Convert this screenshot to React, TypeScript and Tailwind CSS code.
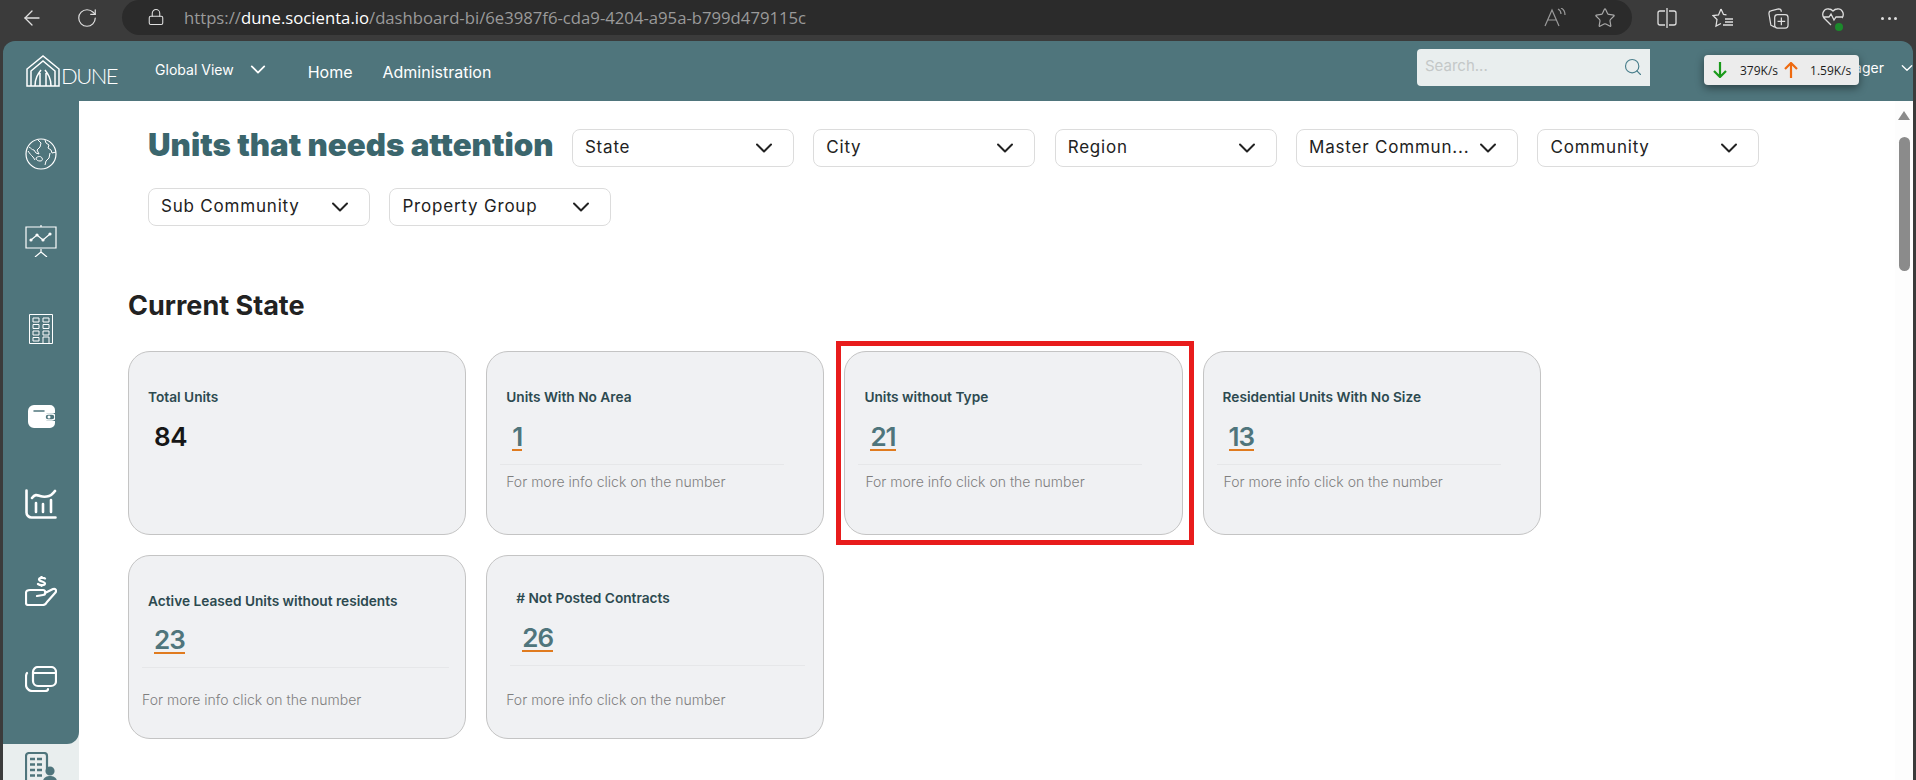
import React from "react";
import { ArrowLeft, Lock, RotateCw, Search, Star } from "lucide-react";

const Chevron = ({ className = "" }: { className?: string }) => (
  <svg viewBox="0 0 18 10" className={className} fill="none" stroke="currentColor" strokeWidth="2" strokeLinecap="round" strokeLinejoin="round">
    <polyline points="2,1.5 9,8.5 16,1.5" />
  </svg>
);

const filters = ["State", "City", "Region", "Master Commun...", "Community", "Sub Community", "Property Group"];

const Select = ({ label }: { label: string }) => (
  <div className="flex h-[38px] w-[222px] items-center justify-between rounded-[8px] border border-[#dcdcdc] bg-white pl-[12px] pr-[20px] text-[17px] tracking-[0.8px] text-[#222]">
    <span className="whitespace-nowrap pb-[1px]">{label}</span>
    <Chevron className="h-[10px] w-[18px] shrink-0 text-[#222]" />
  </div>
);

interface CardProps {
  title: string;
  value: string;
  link?: boolean;
  titleClass?: string;
  numClass?: string;
  ruleClass?: string;
  noteClass?: string;
  marked?: boolean;
}

const Card = ({
  title,
  value,
  link = true,
  titleClass = "pt-[35px] pl-[19px]",
  numClass = "mt-[16px] ml-[25px]",
  ruleClass = "mt-[12px] ml-[13px] w-[284px]",
  noteClass = "mt-[8px] ml-[19px]",
  marked = false,
}: CardProps) => (
  <div className="relative flex h-[184px] flex-col rounded-[22px] border border-[#c4c4c4] bg-[#f0f1f3]">
    <div className={`h-[20px] whitespace-nowrap text-[13.700px] font-semibold leading-[20px] text-[#2d4a50] ${titleClass}`} style={{ boxSizing: "content-box" }}>
      {title}
    </div>
    <div className={numClass}>
      {link ? (
        <span className="inline-block h-[28px] border-b-2 border-[#e07b1f] text-[26px] font-semibold leading-[28px] tracking-[-1px] text-[#4f757c]">{value}</span>
      ) : (
        <span className="inline-block h-[28px] text-[26px] font-semibold leading-[28px] tracking-[-0.5px] text-[#161616]">{value}</span>
      )}
    </div>
    {link && (
      <>
        <div className={`h-px bg-[#e6e7e9] ${ruleClass}`} />
        <div className={`h-[18px] whitespace-nowrap text-[14px] font-light leading-[18px] text-[#7f7f7f] ${noteClass}`}>
          For more info click on the number
        </div>
      </>
    )}
    {marked && <div className="absolute -left-[9px] -right-[12px] -top-[11px] -bottom-[11px] border-[5px] border-[#e81c1c]" />}
  </div>
);

const icon = "fill-none stroke-white";

const SideIcons = [
  <svg key="globe" viewBox="0 0 32 32" className={`h-[32px] w-[32px] ${icon}`} strokeWidth="1">
    <circle cx="16" cy="16" r="15" strokeWidth="1.2" />
    <path d="M4 9c2 1 3 3 5 3l2 3 3 1-2-4 3-3 1-4-3-3M20 2l1 3 3 2-1 3 3 2 1 3 4-1M25 15l-1 5-3 3-1 4M11 20c2-2 5-2 6 0s0 3-2 3-4-1-4-3zM3 13c2 3 3 4 5 6l2 3" />
  </svg>,
  <svg key="board" viewBox="0 0 32 32" className={`h-[32px] w-[32px] ${icon}`} strokeWidth="1.2">
    <path d="M16 0v2M1 2h30v21H1zM16 24v3M16 27l-6 5M16 27l6 5" />
    <path d="M6 15l6-5 6 5 7-6" />
    <circle cx="6" cy="15" r="1" className="fill-white" />
    <circle cx="12" cy="10" r="1" className="fill-white" />
    <circle cx="18" cy="15" r="1" className="fill-white" />
    <circle cx="25" cy="9" r="1" className="fill-white" />
  </svg>,
  <svg key="building" viewBox="0 0 24 30" className={`h-[30px] w-[24px] ${icon}`} strokeWidth="1">
    <path d="M.5.5h23v29H.5zM4 4h6v4H4zM14 4h6v4h-6zM4 10.500h6v4H4zM14 10.500h6v4h-6zM4 17h6v4H4zM14 17h6v4h-6zM4 23.500h6V27H4zM14 23h6v6.500h-6z" />
  </svg>,
  <svg key="wallet" viewBox="0 0 27 23" className="h-[23px] w-[27px]">
    <path d="M6 0h16a5 5 0 0 1 5 5v3h-6a3.500 3.500 0 0 0 0 8h6v2a5 5 0 0 1-5 5H6a6 6 0 0 1-6-6V6a6 6 0 0 1 6-6z" fill="#fff" />
    <rect x="17" y="9" width="10" height="6" rx="3" fill="none" stroke="#fff" strokeWidth="1.500" />
    <circle cx="21" cy="12" r="1.500" fill="#fff" />
    <path d="M6 6h10" stroke="#4f757c" strokeWidth="1.500" strokeLinecap="round" />
  </svg>,
  <svg key="stats" viewBox="0 0 32 30" className={`h-[30px] w-[32px] ${icon}`} strokeWidth="2.600" strokeLinecap="round">
    <path d="M1.500 1.500v22a5 5 0 0 0 5 5h24M7 9c3-4 5-3 8-2s6 1 9 0 4-3 6-5M11 14v9M18 15v8M26 11v12" />
  </svg>,
  <svg key="hand" viewBox="0 0 32 30" className={`h-[30px] w-[32px] ${icon}`} strokeWidth="2.200" strokeLinecap="round" strokeLinejoin="round">
    <path d="M5 14h13c3 0 3 5 0 5l-6 1M20 17l8-4c3-1 4 2 2 4l-8 9c-1 2-2 3-4 3H3c-1 0-2-1-2-2V17c0-2 2-3 4-3" />
    <path d="M20 2.500c-1-1-6-1-6 1s6 2 6 4-5 2-7 .500M16.500 0v1M16.500 9v1" />
  </svg>,
  <svg key="cards" viewBox="0 0 32 26" className={`h-[26px] w-[32px] ${icon}`} strokeWidth="2.200" strokeLinecap="round">
    <rect x="8" y="1" width="23" height="19" rx="5" />
    <path d="M8 7h23M2 7c-1 1-1 2-1 4v8c0 3 3 6 6 6h13c2 0 3-1 3-2" />
  </svg>,
];

const App = () => (
  <div className="relative flex h-[780px] w-[1916px] flex-col overflow-hidden bg-[#3b3b3b] font-['Inter',sans-serif]">
    {/* browser toolbar */}
    <div className="flex h-[41px] shrink-0 items-start font-['Open_Sans',sans-serif]">
      <ArrowLeft className="ml-[20px] mt-[6px] h-[24px] w-[24px] text-[#e0e0e0]" strokeWidth={1.3} />
      <RotateCw className="ml-[32px] mt-[7px] h-[22px] w-[22px] text-[#e0e0e0]" strokeWidth={1.3} />
      <div className="ml-[24px] flex h-[35px] w-[1510px] items-center justify-between rounded-full bg-[#2b2b2b] pl-[25px] pr-[16px]">
        <div className="flex items-center">
          <Lock className="h-[18px] w-[18px] text-[#e0e0e0]" strokeWidth={1.4} />
          <span className="ml-[19px] whitespace-nowrap text-[16.700px] text-[#9a9a9a]">
            https://<span className="text-white">dune.socienta.io</span>/dashboard-bi/6e3987f6-cda9-4204-a95a-b799d479115c
          </span>
        </div>
        <div className="flex items-center gap-[28px]">
          <svg viewBox="0 0 22 20" className="h-[20px] w-[22px] fill-none stroke-[#9a9a9a]" strokeWidth="1.200">
            <path d="M1 18L8 2l7 16M4 12h8M14 1c2 1 3 2 3 5M17 0c2 1 4 3 4 7" />
          </svg>
          <Star className="h-[22px] w-[22px] text-[#a8a8a8]" strokeWidth={1.3} />
        </div>
      </div>
      <div className="flex items-center pt-[7px]">
        <svg viewBox="0 0 20 20" className="ml-[25px] h-[20px] w-[20px] fill-none stroke-[#dedede]" strokeWidth="1.300">
          <path d="M8 3H3a2 2 0 0 0-2 2v10a2 2 0 0 0 2 2h5M12 3h5a2 2 0 0 1 2 2v10a2 2 0 0 1-2 2h-5M10 0v20" />
        </svg>
        <svg viewBox="0 0 22 20" className="ml-[35px] h-[20px] w-[22px] fill-none stroke-[#dedede]" strokeWidth="1.300">
          <path d="M9 1l2.500 5.500 3 .300M9 1L6.500 7 1 7.500l4 4L4 18l5-2.500M13 11h8M13 14h8M11 17h10" />
        </svg>
        <svg viewBox="0 0 22 22" className="ml-[34px] h-[21px] w-[21px] fill-none stroke-[#dedede]" strokeWidth="1.300">
          <path d="M7 20L3 18 1 6c0-2 1-3 2-3l8-2c2 0 3 1 3 3" />
          <rect x="7" y="7" width="14" height="14" rx="3" />
          <path d="M14 10v8M10 14h8" />
        </svg>
        <div className="relative ml-[33px] h-[22px] w-[22px]">
          <svg viewBox="0 0 22 20" className="h-[20px] w-[22px] fill-none stroke-[#dedede]" strokeWidth="1.300">
            <path d="M9 18L2 11C-1 7 2 1 7 2c2 0 3 1 4 2 1-1 2-2 4-2 5-1 8 5 5 9M1 10h6l2-3 3 6 2-3h6" />
          </svg>
          <div className="absolute bottom-[-2px] right-[1px] h-[8px] w-[8px] rounded-full bg-[#1c8a2c]" />
        </div>
        <div className="ml-[37px] flex gap-[3.500px]">
          <div className="h-[3px] w-[3px] rounded-full bg-[#dedede]" />
          <div className="h-[3px] w-[3px] rounded-full bg-[#dedede]" />
          <div className="h-[3px] w-[3px] rounded-full bg-[#dedede]" />
        </div>
      </div>
    </div>

    {/* app panel */}
    <div className="relative mx-[3px] flex min-h-0 flex-1 flex-col overflow-hidden rounded-t-[12px] bg-[#4f757c]">
      <header className="flex h-[60px] shrink-0 items-center text-white">
        <div className="ml-[23px] flex items-end">
          <svg viewBox="0 0 34 32" className="h-[32px] w-[34px] fill-none stroke-white" strokeWidth="1.500">
            <path d="M1 31V14L17 1l16 13v17h-4V16L17 6 5 16v15zM9 31c0-8 3-12 6-16M25 31c0-8-3-12-6-16M14 31V18M20 31V18M5 31h24" />
          </svg>
          <span className="ml-[1px] font-['Lato',sans-serif] text-[22px] font-light leading-[22px] tracking-[-1.500px]">DUNE</span>
        </div>
        <div className="ml-[38px] flex items-center pb-[3px]">
          <span className="whitespace-nowrap text-[14px]">Global View</span>
          <Chevron className="ml-[16px] h-[9px] w-[16px]" />
        </div>
        <span className="ml-[42px] pt-[1px] text-[16px]">Home</span>
        <span className="ml-[30px] pt-[1px] text-[16px]">Administration</span>
        <div className="mb-[7px] ml-auto flex h-[37px] w-[233px] items-center justify-between rounded-l-[4px] bg-[#e9eeee] pb-[2px] pl-[8px] pr-[7px]">
          <span className="text-[15px] text-[#c4c8c8]">Search...</span>
          <Search className="h-[20px] w-[20px] text-[#4a7f8c]" strokeWidth={1.400} />
        </div>
        <span className="mb-[8px] ml-[20px] w-[214px] text-right text-[14px]">ager</span>
        <Chevron className="mb-[6px] ml-[17px] mr-0 h-[8px] w-[12px]" />
      </header>

      <div className="flex min-h-0 flex-1">
        {/* sidebar */}
        <aside className="flex w-[76px] shrink-0 flex-col bg-[#e9eeee]">
          <div className="flex h-[643px] shrink-0 flex-col items-center rounded-br-[12px] bg-[#4f757c] pt-[9px]">
            {SideIcons.map((item, i) => (
              <div key={i} className="flex h-[87.500px] w-full shrink-0 items-center justify-center">
                {item}
              </div>
            ))}
          </div>
          <div className="flex shrink-0 justify-center pt-[8px]">
            <svg viewBox="0 0 32 46" className="h-[46px] w-[32px] shrink-0 fill-none stroke-[#4f757c]" strokeWidth="2.200">
              <path d="M18 44H4a3 3 0 0 1-3-3V4a3 3 0 0 1 3-3h15a3 3 0 0 1 3 3v13" />
              <path d="M5 7h5M12 7h5M5 12.500h5M12 12.500h5M5 18h5M12 18h5M5 23.500h5M12 23.500h5" strokeWidth="2.500" />
              <circle cx="25" cy="19" r="3.500" className="fill-[#4f757c]" />
              <path d="M19 34v-4a5 5 0 0 1 5-5h2a5 5 0 0 1 5 5v4z" className="fill-[#4f757c]" />
            </svg>
          </div>
        </aside>

        {/* main */}
        <main className="flex min-w-0 flex-1 bg-white">
          <div className="min-w-0 flex-1">
            <div className="flex flex-wrap items-center gap-x-[19.400px] gap-y-[21px] pl-[69px] pt-[28px]">
              <h1 className="mb-[6px] w-[404.500px] whitespace-nowrap text-[31.300px] font-black leading-[32px] text-[#3b666d]">Units that needs attention</h1>
              {filters.map((f) => (
                <Select key={f} label={f} />
              ))}
            </div>
            <h2 className="ml-[49px] mt-[64px] text-[27px] font-bold leading-[32px] text-[#222]">Current State</h2>
            <div className="ml-[49px] mt-[29px] grid w-fit grid-cols-[repeat(4,338.200px)] gap-x-[20px] gap-y-[20px]">
              <Card title="Total Units" value="84" link={false} />
              <Card title="Units With No Area" value="1" />
              <Card title="Units without Type" value="21" marked noteClass="mt-[8px] ml-[20px]" />
              <Card title="Residential Units With No Size" value="13" noteClass="mt-[8px] ml-[20px]" />
              <Card
                title="Active Leased Units without residents"
                value="23"
                numClass="mt-[15px] ml-[25px]"
                ruleClass="mt-[12px] ml-[13px] w-[307px]"
                noteClass="mt-[23px] ml-[13px]"
              />
              <Card
                title="# Not Posted Contracts"
                value="26"
                titleClass="pt-[32px] pl-[29px]"
                numClass="mt-[16px] ml-[35px]"
                ruleClass="mt-[12px] ml-[23px] w-[295px]"
                noteClass="mt-[25px] ml-[19px]"
              />
            </div>
          </div>
          {/* scrollbar */}
          <div className="flex w-[18px] shrink-0 flex-col items-center bg-[#fdfdfd] pt-[10px]">
            <div className="h-0 w-0 border-x-[6px] border-b-[9px] border-x-transparent border-b-[#8b8b8b]" />
            <div className="mt-[17px] h-[134px] w-[11px] rounded-full bg-[#8b8b8b]" />
          </div>
        </main>
      </div>
    </div>

    {/* network speed widget */}
    <div className="absolute left-[1704px] top-[55px] z-20 flex h-[30px] w-[155px] items-center rounded-[4px] bg-[#ececec] pl-[9px] font-['Open_Sans',sans-serif] text-[12px] text-[#1c1c1c] shadow-[0_3px_8px_rgba(0,0,0,0.45)]">
      <svg viewBox="0 0 14 16" className="h-[16px] w-[14px] fill-none stroke-[#1a9a1a]" strokeWidth="2.200">
        <path d="M7 0v15M1 9l6 6 6-6" />
      </svg>
      <span className="ml-[13px] pt-[2px]">379K/s</span>
      <svg viewBox="0 0 14 16" className="ml-[6px] h-[16px] w-[14px] fill-none stroke-[#ee6a10]" strokeWidth="2.200">
        <path d="M7 16V1M1 7l6-6 6 6" />
      </svg>
      <span className="ml-[12px] pt-[2px]">1.59K/s</span>
    </div>
  </div>
);

export default App;
